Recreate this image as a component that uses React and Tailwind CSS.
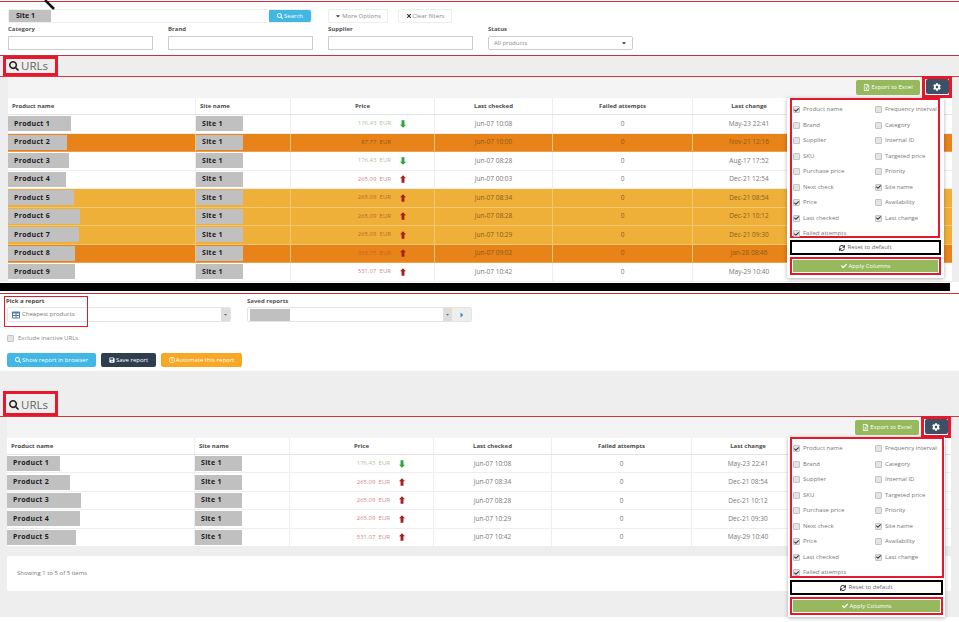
import React from 'react';
import { FaSearch, FaCog, FaCaretDown, FaCaretRight, FaTimes, FaRegFileExcel, FaSync, FaCheck, FaSave, FaRegClock, FaTable } from 'react-icons/fa';

const GRID = 'grid grid-cols-[188px_95px_144px_118px_140px_112px_1fr]';
const FONT = { fontFamily: '"Open Sans", sans-serif' };

const topRows = [
  { name: 'Product 1', w: 63, price: '176.43', dir: 'down', checked: 'Jun-07 10:08', change: 'May-23 22:41' },
  { name: 'Product 2', w: 59, price: '87.77', dir: null, checked: 'Jun-07 10:00', change: 'Nov-21 12:16', tone: 'dark' },
  { name: 'Product 3', w: 61, price: '176.43', dir: 'down', checked: 'Jun-07 08:28', change: 'Aug-17 17:52' },
  { name: 'Product 4', w: 58, price: '265.09', dir: 'up', checked: 'Jun-07 00:03', change: 'Dec-21 12:54' },
  { name: 'Product 5', w: 66, price: '265.09', dir: 'up', checked: 'Jun-07 08:34', change: 'Dec-21 08:54', tone: 'light' },
  { name: 'Product 6', w: 72, price: '265.09', dir: 'up', checked: 'Jun-07 08:28', change: 'Dec-21 10:12', tone: 'light' },
  { name: 'Product 7', w: 71, price: '265.09', dir: 'up', checked: 'Jun-07 10:29', change: 'Dec-21 09:30', tone: 'light' },
  { name: 'Product 8', w: 67, price: '353.75', dir: 'up', checked: 'Jun-07 09:02', change: 'Jan-28 08:46', tone: 'dark' },
  { name: 'Product 9', w: 67, price: '531.07', dir: 'up', checked: 'Jun-07 10:42', change: 'May-29 10:40' },
];

const bottomRows = [
  { name: 'Product 1', w: 53, price: '176.43', dir: 'down', checked: 'Jun-07 10:08', change: 'May-23 22:41' },
  { name: 'Product 2', w: 63, price: '265.09', dir: 'up', checked: 'Jun-07 08:34', change: 'Dec-21 08:54' },
  { name: 'Product 3', w: 74, price: '265.09', dir: 'up', checked: 'Jun-07 08:28', change: 'Dec-21 10:12' },
  { name: 'Product 4', w: 73, price: '265.09', dir: 'up', checked: 'Jun-07 10:29', change: 'Dec-21 09:30' },
  { name: 'Product 5', w: 69, price: '531.07', dir: 'up', checked: 'Jun-07 10:42', change: 'May-29 10:40' },
];

const columns = [
  ['Product name', true], ['Frequency interval', false],
  ['Brand', false], ['Category', false],
  ['Supplier', false], ['Internal ID', false],
  ['SKU', false], ['Targeted price', false],
  ['Purchase price', false], ['Priority', false],
  ['Next check', false], ['Site name', true],
  ['Price', true], ['Availability', false],
  ['Last checked', true], ['Last change', true],
  ['Failed attempts', true],
];

const Checkbox = ({ on }) => (
  <span className="w-[7px] h-[7px] shrink-0 rounded-[1px] bg-[#e4e4e4] border border-[#c4c4c4] flex items-center justify-center">
    {on && <FaCheck className="text-[#333] text-[6px]" />}
  </span>
);

// fat little arrow from the price column
const Arrow = ({ dir }) => (
  <svg width="6" height="8" viewBox="0 0 7 9" fill={dir === 'up' ? '#a81f1f' : '#2fa53a'}>
    {dir === 'up'
      ? <polygon points="3.5,0 7,3.5 5.2,3.5 5.2,9 1.8,9 1.8,3.5 0,3.5" />
      : <polygon points="1.8,0 5.2,0 5.2,5.5 7,5.5 3.5,9 0,5.5 1.8,5.5" />}
  </svg>
);

const Mask = ({ w, children }) => (
  <div style={{ width: w }} className="h-[15px] bg-[#c0c0c0] pl-[6px] flex items-center text-[7px] font-bold text-[#1c1c1c] tracking-[0.3px]">
    {children}
  </div>
);

const Row = ({ row, rowClass }) => {
  const bg = row.tone === 'dark' ? 'bg-[#e8831a] border-[#eea04e]' : row.tone === 'light' ? 'bg-[#efb03a] border-[#f3c670]' : 'bg-white border-[#eeeeee]';
  const up = row.tone ? 'text-[#c2662c]' : 'text-[#cf8a8a]';
  const down = 'text-[#a9c995]';
  const muted = row.tone ? 'text-[#8a5a1c]' : 'text-[#777777]';
  const line = row.tone ? 'border-[#f3c670]' : 'border-[#eeeeee]';
  return (
    <div className={`${GRID} ${rowClass} ${bg} border-b items-center text-[6.5px]`}>
      <div className={`h-full flex items-center border-r ${line}`}><Mask w={row.w}>{row.name}</Mask></div>
      <div className={`h-full flex items-center border-r ${line}`}><Mask w={47}>Site 1</Mask></div>
      <div className={`h-full flex items-center justify-end pr-[27px] border-r ${line}`}>
        <span className={`text-[6px] ${row.dir === 'down' ? down : row.dir === 'up' ? up : 'text-[#8a5a1c]'}`}>{row.price}&nbsp;&nbsp;EUR</span>
        <span className="w-[8px] ml-[8px] flex justify-center">
          {row.dir && <Arrow dir={row.dir} />}
        </span>
      </div>
      <div className={`h-full flex items-center justify-center border-r ${line} ${muted}`}>{row.checked}</div>
      <div className={`h-full flex items-center justify-center border-r ${line} ${muted}`}>0</div>
      <div className={`h-full flex items-center justify-center ${muted}`}>{row.change}</div>
      <div />
    </div>
  );
};

const ColumnsMenu = ({ className, boxClass }) => (
  <div className={`absolute z-10 w-[157px] bg-white shadow-[0_1px_4px_rgba(0,0,0,0.3)] ${className}`}>
    <div className={`grid grid-cols-[82px_1fr] content-start border-2 border-[#e8182c] pl-[1px] pt-[2px] ${boxClass}`}>
      {columns.map(([label, on]) => (
        <div key={label} className="h-[15.5px] flex items-center gap-[3px] text-[6px] text-[#777777] whitespace-nowrap">
          <Checkbox on={on} />
          {label}
        </div>
      ))}
    </div>
    <div className="h-[15px] mt-[2px] border-2 border-black bg-white flex items-center justify-center gap-[2px] text-[6px] text-[#666666]">
      <FaSync className="text-[#333] text-[6px]" /> Reset to default
    </div>
    <div className="h-[18px] mt-[2px] border-2 border-[#e8182c] bg-white p-px">
      <div className="h-full bg-[#97b95d] flex items-center justify-center gap-[2px] text-[6px] text-white">
        <FaCheck className="text-[6px]" /> Apply Columns
      </div>
    </div>
  </div>
);

const UrlsPanel = ({ rows, headClass, titleClass, panelClass, wrapClass, rowClass, menuClass, boxClass, children }) => (
  <section className={`relative bg-[#eeeeee] ${panelClass}`}>
    <div className={`border-b border-[#d8353f] flex items-end ${headClass}`}>
      <div className={`w-[55px] h-full border-[3px] border-[#e8182c] ml-[3px] flex items-center gap-[2px] pl-[3px] text-[11.5px] text-[#666666] ${titleClass}`}>
        <FaSearch className="text-[#222] text-[10px]" /> URLs
      </div>
    </div>
    <div className={wrapClass}>
      <div className="h-[21px] bg-[#f4f4f4] flex items-center justify-end gap-[2px]">
        <div className="w-[64px] h-[15px] rounded-[2px] bg-[#97b95d] text-white text-[6px] flex items-center justify-center gap-[1px]">
          <FaRegFileExcel className="text-[7px]" /> Export to Excel
        </div>
        <div className="w-[30px] h-[22px] -mt-[2px] border-[3px] border-[#e8182c] bg-white flex items-center justify-center">
          <div className="w-[23px] h-[15px] rounded-[2px] bg-[#3d5166] text-white flex items-center justify-center">
            <FaCog className="text-[8px]" />
          </div>
        </div>
      </div>
      <div className={`${GRID} h-[17px] bg-white border-b border-[#e4e4e4] items-center text-[6px] font-bold text-[#4a4a4a]`}>
        <div className="h-full flex items-center pl-[4px] border-r border-[#eeeeee]">Product name</div>
        <div className="h-full flex items-center pl-[4px] border-r border-[#eeeeee]">Site name</div>
        <div className="h-full flex items-center justify-center border-r border-[#eeeeee]">Price</div>
        <div className="h-full flex items-center justify-center border-r border-[#eeeeee]">Last checked</div>
        <div className="h-full flex items-center justify-center border-r border-[#eeeeee]">Failed attempts</div>
        <div className="h-full flex items-center justify-center">Last change</div>
        <div />
      </div>
      {rows.map((row) => <Row key={row.name} row={row} rowClass={rowClass} />)}
      {children}
    </div>
    <ColumnsMenu className={menuClass} boxClass={boxClass} />
  </section>
);

const Field = ({ label, children }) => (
  <div className="w-[145px]">
    <div className="h-[9px] mb-[2px] text-[6px] font-bold text-[#555555] leading-[9px]">{label}</div>
    {children}
  </div>
);

const Filters = () => (
  <section className="h-[55px] mt-px bg-white border-t border-b border-[#c9303a] relative pt-[7px] pl-[8px] text-[6px]">
    <svg className="absolute left-[44px] -top-[2px]" width="12" height="11" viewBox="0 0 12 11"><path d="M1 0 L10 9" stroke="#111" strokeWidth="2.5" /></svg>
    <div className="flex h-[14px] items-center">
      <div className="w-[304px] h-[14px] flex border border-[#eeeeee] rounded-[2px]">
        <div className="w-[42px] bg-[#c0c0c0] pl-[7px] flex items-center font-bold text-[#1c1c1c] text-[7px]">Site 1</div>
        <div className="flex-1 bg-white" />
        <div className="w-[42px] bg-[#41b7e4] text-white flex items-center justify-center gap-[1px] rounded-r-[2px]"><FaSearch className="text-[6px]" /> Search</div>
      </div>
      <div className="ml-[16px] w-[60px] h-[14px] border border-[#eeeeee] rounded-[2px] flex items-center justify-center gap-[1px] text-[#888888]"><FaCaretDown className="text-[#333] text-[6px]" /> More Options</div>
      <div className="ml-[10px] w-[54px] h-[14px] border border-[#eeeeee] rounded-[2px] flex items-center justify-center gap-[1px] text-[#888888]"><FaTimes className="text-[#333] text-[6px]" /> Clear filters</div>
    </div>
    <div className="flex gap-[15px] mt-[2px]">
      <Field label="Category"><div className="h-[14px] border border-[#cccccc]" /></Field>
      <Field label="Brand"><div className="h-[14px] border border-[#cccccc]" /></Field>
      <Field label="Supplier"><div className="h-[14px] border border-[#cccccc]" /></Field>
      <Field label="Status">
        <div className="h-[14px] border border-[#cccccc] rounded-[2px] flex items-center justify-between px-[5px] text-[#888888]">
          All products <FaCaretDown className="text-[#333] text-[6px]" />
        </div>
      </Field>
    </div>
  </section>
);

const Reports = () => (
  <section className="relative h-[80px] bg-white pt-[2px] text-[6px]">
    <div className="border-t border-[#c9303a] pt-[3px] pl-[7px]">
      <div className="absolute left-[4px] top-[5px] w-[84px] h-[31px] border border-[#e8182c]" />
      <div className="flex gap-[16px]">
        <div className="w-[224px]">
          <div className="h-[9px] font-bold text-[#444444] leading-[9px] -ml-px">Pick a report</div>
          <div className="h-[15px] mt-[1px] border border-[#e4e4e4] rounded-[2px] flex items-center pl-[4px] text-[#777777]">
            <FaTable className="text-[#4f81a8] text-[8px] mr-[2px]" /> Cheapest products
            <span className="ml-auto w-[9px] h-full bg-[#dddddd] flex items-center justify-center"><FaCaretDown className="text-[#666] text-[5px]" /></span>
          </div>
        </div>
        <div className="w-[225px]">
          <div className="h-[9px] font-bold text-[#555555] leading-[9px]">Saved reports</div>
          <div className="h-[15px] mt-[1px] border border-[#e4e4e4] rounded-[2px] flex items-center">
            <div className="w-[40px] h-[12px] ml-[2px] bg-[#c0c0c0]" />
            <span className="ml-auto w-[9px] h-full bg-[#dddddd] flex items-center justify-center"><FaCaretDown className="text-[#666] text-[5px]" /></span>
            <span className="w-[19px] h-full bg-[#eeeeee] flex items-center justify-center"><FaCaretRight className="text-[#3f8fc4] text-[8px]" /></span>
          </div>
        </div>
      </div>
      <div className="flex items-center gap-[4px] mt-[12px] text-[#888888]">
        <Checkbox /> Exclude inactive URLs
      </div>
      <div className="flex gap-[5px] mt-[10px] text-white">
        <div className="w-[89px] h-[14px] rounded-[2px] bg-[#41b7e4] flex items-center justify-center gap-[1px]"><FaSearch className="text-[6px]" /> Show report in browser</div>
        <div className="w-[55px] h-[14px] rounded-[2px] bg-[#2f3e4e] flex items-center justify-center gap-[1px]"><FaSave className="text-[6px]" /> Save report</div>
        <div className="w-[81px] h-[14px] rounded-[2px] bg-[#f9a825] flex items-center justify-center gap-[1px]"><FaRegClock className="text-[6px]" /> Automate this report</div>
      </div>
    </div>
  </section>
);

export default function App() {
  return (
    <div style={FONT} className="w-[959px] h-[622px] overflow-hidden bg-white">
      <Filters />
      <UrlsPanel
        rows={topRows}
        panelClass="h-[226px]"
        headClass="h-[21px]"
        titleClass=""
        wrapClass="ml-[8px] mr-[7px]"
        rowClass="h-[18.5px]"
        menuClass="top-[42px] right-[15px] h-[180px] px-[3px]"
        boxClass="w-[150px] h-[140px]"
      />
      <div className="h-[1px]" />
      <div className="h-[8px] w-[950px] bg-black" />
      <Reports />
      <UrlsPanel
        rows={bottomRows}
        panelClass="h-[246px]"
        headClass="h-[46px] pt-[20px]"
        titleClass="pt-[3px]"
        wrapClass="ml-[7px] mr-[8px]"
        rowClass="h-[18.4px]"
        menuClass="top-[66px] right-[14px] h-[180px] px-[2px]"
        boxClass="w-[154px] h-[141px]"
      >
        <div className="h-[35px] mt-[9px] bg-white rounded-[2px] flex items-center pl-[10px] text-[6px] text-[#777777]">
          Showing 1 to 5 of 5 items
        </div>
      </UrlsPanel>
    </div>
  );
}
